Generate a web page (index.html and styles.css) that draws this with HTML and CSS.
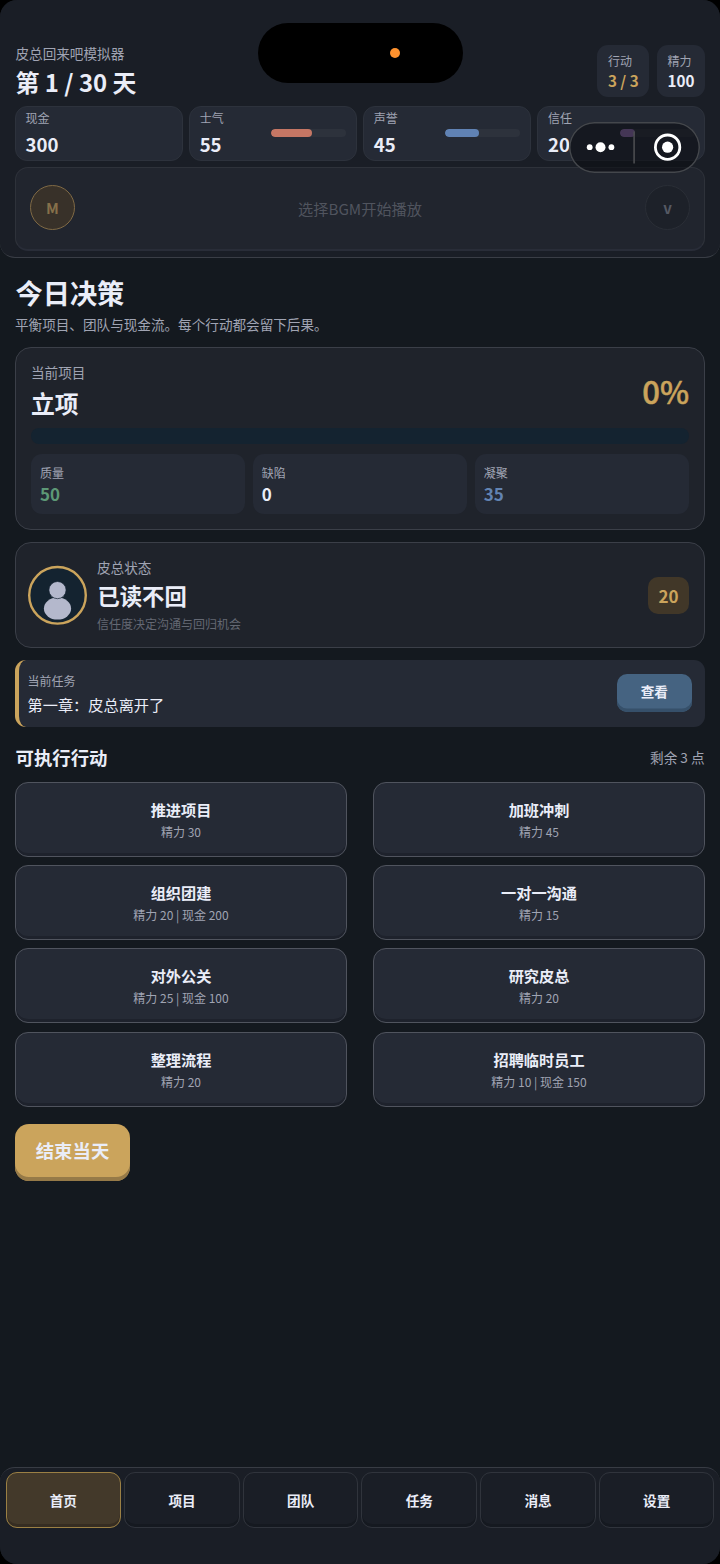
FILE: index.html
```html
<!DOCTYPE html>
<html lang="zh-CN">
<head>
<meta charset="utf-8">
<title>皮总回来吧模拟器</title>
<link rel="stylesheet" href="styles.css">
</head>
<body>
<div class="app">
  <header class="top">
    <div class="top-row">
      <div class="heading">
        <div class="game-name">皮总回来吧模拟器</div>
        <div class="day">第 1 / 30 天</div>
      </div>
      <div class="chips">
        <div class="chip"><span class="label">行动</span><b class="gold">3 / 3</b></div>
        <div class="chip"><span class="label">精力</span><b>100</b></div>
      </div>
    </div>
    <div class="stats">
      <div class="stat"><div><span class="label">现金</span><b>300</b></div></div>
      <div class="stat"><div><span class="label">士气</span><b>55</b></div><div class="meter"><i class="fill red" style="width:55%"></i></div></div>
      <div class="stat"><div><span class="label">声誉</span><b>45</b></div><div class="meter"><i class="fill blue" style="width:45%"></i></div></div>
      <div class="stat"><div><span class="label">信任</span><b>20</b></div><div class="meter"><i class="fill purple" style="width:20%"></i></div></div>
    </div>
    <div class="music">
      <span class="disc">M</span>
      <span class="track">选择BGM开始播放</span>
      <span class="expand">v</span>
    </div>
  </header>

  <div class="island"><i class="mic"></i></div>
  <div class="capsule">
    <svg width="131" height="51" viewBox="0 0 131 51">
      <g fill="#fff"><circle cx="20.7" cy="25.2" r="2.9"/><circle cx="31.5" cy="25.2" r="5"/><circle cx="42.4" cy="25.2" r="2.9"/><circle cx="98.6" cy="25.2" r="5.6"/></g>
      <path d="M65.1 9.5V41.5" stroke="#4b4c50" stroke-width="1.6"/>
      <circle cx="98.6" cy="25.2" r="12.2" fill="none" stroke="#fff" stroke-width="2.8"/>
    </svg>
  </div>

  <main class="content">
    <h1>今日决策</h1>
    <p class="intro">平衡项目、团队与现金流。每个行动都会留下后果。</p>

    <section class="card project">
      <div class="project-head">
        <div><div class="sub">当前项目</div><div class="stage">立项</div></div>
        <div class="percent">0%</div>
      </div>
      <div class="progress"></div>
      <div class="metrics">
        <div class="metric"><span class="label">质量</span><b class="green">50</b></div>
        <div class="metric"><span class="label">缺陷</span><b>0</b></div>
        <div class="metric"><span class="label">凝聚</span><b class="blue-text">35</b></div>
      </div>
    </section>

    <section class="card boss">
      <svg class="avatar" width="60" height="60" viewBox="0 0 60 60">
        <circle cx="30.5" cy="30.3" r="28.3" fill="#142330" stroke="#cba45c" stroke-width="2.4"/>
        <ellipse cx="30.5" cy="43.6" rx="13.6" ry="11" fill="#b4b8cc"/>
        <circle cx="30.5" cy="25.1" r="8.6" fill="#b4b8cc" stroke="#142330" stroke-width=".7"/>
      </svg>
      <div class="boss-text">
        <div class="sub">皮总状态</div>
        <div class="boss-state">已读不回</div>
        <div class="hint">信任度决定沟通与回归机会</div>
      </div>
      <div class="badge">20</div>
    </section>

    <section class="task">
      <div><div class="label">当前任务</div><div class="task-name">第一章：皮总离开了</div></div>
      <button class="view">查看</button>
    </section>

    <div class="section-head"><h2>可执行行动</h2><span>剩余 3 点</span></div>
    <div class="actions">
      <button class="action"><b>推进项目</b><span>精力 30</span></button>
      <button class="action"><b>加班冲刺</b><span>精力 45</span></button>
      <button class="action"><b>组织团建</b><span>精力 20 | 现金 200</span></button>
      <button class="action"><b>一对一沟通</b><span>精力 15</span></button>
      <button class="action"><b>对外公关</b><span>精力 25 | 现金 100</span></button>
      <button class="action"><b>研究皮总</b><span>精力 20</span></button>
      <button class="action"><b>整理流程</b><span>精力 20</span></button>
      <button class="action"><b>招聘临时员工</b><span>精力 10 | 现金 150</span></button>
    </div>
    <button class="end-day">结束当天</button>
  </main>

  <nav class="tabs">
    <button class="tab active">首页</button>
    <button class="tab">项目</button>
    <button class="tab">团队</button>
    <button class="tab">任务</button>
    <button class="tab">消息</button>
    <button class="tab">设置</button>
  </nav>
</div>
</body>
</html>
```
FILE: styles.css
```css
* { box-sizing: border-box; }
body { margin: 0; background: #000; }
body, button { font-family: "Noto Sans CJK SC", sans-serif; color: #eaedf8; }
button { border: 0; padding: 0; }
h1, h2, p { margin: 0; }
b { font-weight: 700; }

.app {
  position: relative;
  display: flex;
  flex-direction: column;
  width: 720px;
  height: 1564px;
  background: #14191f;
  border-radius: 17px;
  overflow: hidden;
}

.label { display: block; font-size: 12px; line-height: 18px; color: #a0a4b3; }
.sub { font-size: 13.6px; line-height: 20px; color: #a0a4b3; }
.gold { color: #cba45c; }
.green { color: #5d9876; }
.blue-text { color: #6283b2; }

/* Header */
.top {
  height: 258px;
  padding: 0 15px;
  background: #1a1e26;
  border-bottom: 1px solid #3a3e46;
  border-radius: 0 0 15px 15px;
}
.top-row { display: flex; justify-content: space-between; height: 106px; }
.heading { padding-top: 43px; }
.game-name { font-size: 13.6px; line-height: 20px; color: #a0a4b3; padding-left: .5px; }
.day { font-size: 23.9px; line-height: 38px; font-weight: 700; padding-left: .5px; }
.chips { display: flex; gap: 8px; padding-top: 45px; }
.chip {
  height: 52px;
  padding: 6.5px 10.5px 0;
  background: #252a35;
  border-radius: 11px;
}
.chip b { display: block; font-size: 15.2px; line-height: 21px; }

.stats { display: grid; grid-template-columns: repeat(4, 1fr); gap: 6.6px; height: 54.5px; }
.stat {
  display: flex;
  justify-content: space-between;
  align-items: center;
  padding: 0 9.5px;
  background: #252a35;
  border: 1px solid #2d323c;
  border-radius: 12px;
}
.stat b { display: block; font-size: 18.6px; line-height: 28px; margin-top: 3px; }
.stat .label { margin-top: 0; }
.meter { width: 75px; height: 8px; border-radius: 4px; background: #2d323c; overflow: hidden; }
.fill { display: block; height: 100%; border-radius: 4px; }
.red { background: #c57664; }
.blue { background: #6082b4; }
.purple { background: #9a74ba; }

.music {
  display: flex;
  align-items: center;
  justify-content: space-between;
  height: 84px;
  margin-top: 6.5px;
  padding: 0 14px 2px;
  background: #21252e;
  border: 1px solid #2e323a;
  border-bottom: 2px solid #292d38;
  border-radius: 13px;
}
.disc, .expand {
  display: flex;
  align-items: center;
  justify-content: center;
  width: 45px;
  height: 45px;
  border-radius: 50%;
  font-weight: 700;
  font-size: 15px;
}
.disc { background: #383129; border: 1px solid #806a45; color: #86704a; }
.expand { background: #1d2129; border: 1px solid #2a2e36; color: #555963; }
.track { font-size: 15.2px; color: #50545e; }

/* System overlays */
.island {
  position: absolute;
  left: 257.5px;
  top: 23px;
  width: 205px;
  height: 60px;
  border-radius: 30px;
  background: #000;
}
.mic { position: absolute; left: 132.5px; top: 25px; width: 10px; height: 10px; border-radius: 50%; background: #ff922e; }
.capsule {
  position: absolute;
  left: 569px;
  top: 121.5px;
  width: 131px;
  height: 51.5px;
  border-radius: 26px;
  background: rgba(12, 14, 18, .6);
  box-shadow: inset 0 0 0 1.5px #44474c;
}
.capsule svg { display: block; }

/* Content */
.content { flex: 1; padding: 15px 15px 0; }
h1 { font-size: 27.2px; line-height: 38px; padding-left: .5px; }
.intro { font-size: 13.6px; line-height: 20px; margin-top: 3px; color: #a0a4b3; }
.card { background: #1f232b; border: 1px solid #3b3f48; border-radius: 16px; }

.project { height: 183px; margin-top: 12.5px; padding: 14px 15px 0 15px; }
.project-head { display: flex; justify-content: space-between; align-items: flex-start; height: 66px; }
.project-head .sub { margin-top: 0; }
.stage { font-size: 23.8px; line-height: 38px; font-weight: 700; margin-top: 2px; }
.percent { color: #cba45c; font-size: 31px; line-height: 44px; font-weight: 500; margin-top: 7px; -webkit-text-stroke: .5px #cba45c; }
.progress { height: 16px; border-radius: 8px; background: #142330; }
.metrics { display: grid; grid-template-columns: repeat(3, 1fr); gap: 7.5px; margin-top: 10px; }
.metric { height: 60px; padding: 10px 9px 0; border-radius: 11px; background: #252a35; }
.metric b { display: block; font-size: 17px; line-height: 23px; }

.boss { display: flex; align-items: center; height: 106px; margin-top: 12.5px; padding: 0 15px 0 11px; }
.boss-text { flex: 1; padding-left: 10px; }
.boss-state { font-size: 22.3px; line-height: 36px; font-weight: 700; padding: 0 0 2px .5px; }
.hint { font-size: 12px; line-height: 18px; color: #646873; }
.badge {
  width: 41px;
  height: 37px;
  border-radius: 10px;
  background: #413728;
  color: #cba45c;
  font-size: 17px;
  line-height: 37px;
  font-weight: 700;
  text-align: center;
}

.task {
  display: flex;
  justify-content: space-between;
  align-items: center;
  height: 67.5px;
  margin-top: 11.5px;
  padding: 0 13.5px 0 8.5px;
  background: #252a35;
  border-left: 4px solid #cba45c;
  border-radius: 11px;
}
.task .label { margin-top: 2px; }
.task-name { font-size: 15.2px; line-height: 24px; margin-top: 2px; }
.view {
  width: 74.5px;
  height: 38px;
  padding-bottom: 4px;
  border-radius: 10px;
  background: #456381;
  box-shadow: inset 0 -3.5px #36506a;
  font-size: 13.6px;
  font-weight: 700;
}

.section-head { display: flex; justify-content: space-between; align-items: center; height: 28px; margin-top: 16px; }
h2 { font-size: 18.4px; line-height: 28px; padding-left: .5px; }
.section-head span { font-size: 13.6px; line-height: 20px; color: #a0a4b3; padding: 0 .5px 1px 0; }
.actions { display: grid; grid-template-columns: 1fr 1fr; column-gap: 26px; row-gap: 8.2px; margin-top: 11px; }
.action {
  display: flex;
  flex-direction: column;
  align-items: center;
  height: 75px;
  padding-top: 14px;
  background: #252a35;
  border: 1px solid #50545e;
  border-radius: 13px;
  box-shadow: inset 0 -3px #1e222c;
}
.action b { font-size: 15.2px; line-height: 24px; }
.action span { font-size: 12px; line-height: 20px; margin-top: 1px; color: #a0a4b3; }
.end-day {
  display: block;
  width: 115px;
  height: 56.5px;
  margin-top: 17.5px;
  padding-bottom: 4px;
  border-radius: 14px;
  background: #cba45c;
  box-shadow: inset 0 -4px #967a48;
  font-size: 18.4px;
  font-weight: 700;
}

/* Bottom navigation */
.tabs {
  display: grid;
  grid-template-columns: repeat(6, 1fr);
  gap: 3px;
  height: 97px;
  padding: 4px 5.5px 0;
  background: #1a1e26;
  border-top: 1px solid #383c44;
  border-radius: 15px 15px 0 0;
}
.tab {
  height: 56px;
  border: 1px solid #30343c;
  border-radius: 11px;
  background: #1a1e26;
  box-shadow: inset 0 -3px #151920;
  font-size: 13.6px;
  font-weight: 700;
}
.tab.active { background: #43392a; border-color: #9b8044; box-shadow: inset 0 -3px #362d22; }
```
